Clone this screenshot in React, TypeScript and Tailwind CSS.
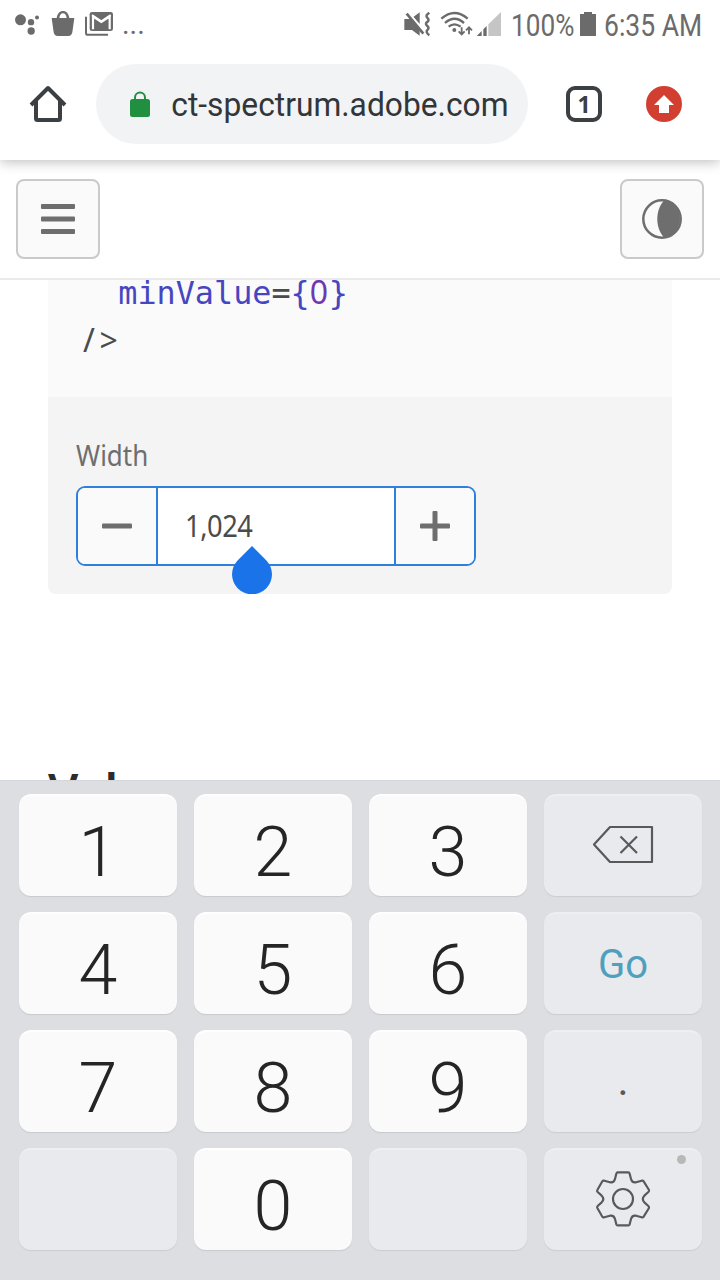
import React from "react";

function NotificationIcons() {
  return (
    <svg className="h-8 w-[104px] shrink-0" viewBox="36 24 312 96" fill="#6b6b6b">
      <circle cx="61.5" cy="59.5" r="16.5" />
      <circle cx="93" cy="66.500" r="9.500" />
      <circle cx="111" cy="52.500" r="6" />
      <circle cx="93.500" cy="93" r="11" />
      <path d="M155 54H170C172 41 179 33 189 33S206 41 208 54H223L217 97Q215 108 205 108H173Q163 108 161 97ZM178 54H200C199 45 195 40 189 40S179 45 178 54Z" fillRule="evenodd" />
      <path d="M258 50V98Q258 104.500 264.500 104.500H324" fill="none" stroke="#6b6b6b" strokeWidth="6" />
      <rect x="269" y="36" width="70" height="57" rx="7" />
      <path d="M279 88V50L304 66L329 50V88" fill="none" stroke="#fff" strokeWidth="6.500" />
      <path d="M276 43H332L304 61Z" fill="#6b6b6b" />
      <path d="M276 45.500L304 64L332 45.500" fill="none" stroke="#fff" strokeWidth="6" />
    </svg>
  );
}

function SystemIcons() {
  return (
    <svg className="h-8 w-[102px] shrink-0" viewBox="36 24 306 96" fill="#6b6b6b">
      <path d="M43 57H66L89 84V107L66 90H43Z" />
      <path d="M70 51L89 37V72Z" />
      <path d="M58 39L104 95" stroke="#fff" strokeWidth="4" />
      <path d="M50 41L100 101" stroke="#6b6b6b" strokeWidth="8" />
      <path d="M118 38Q106 46 111 52Q119 59 113 65Q104 70 111 77Q119 83 113 89Q105 96 118 106" fill="none" stroke="#6b6b6b" strokeWidth="7.500" />
      <g fill="none" stroke="#6b6b6b" strokeWidth="7">
        <path d="M154 56Q193 22 233 56" />
        <path d="M165 69Q193 44 222 69" />
        <path d="M176 80Q193 66 212 80" />
        <path d="M215 82V103M206 94L215 103L224 94M237 103V83M228 91L237 82L246 91" strokeWidth="5.500" />
      </g>
      <circle cx="193" cy="90" r="6" />
      <path d="M333 36V108H295V73Z" fill="#c5c5c5" />
      <path d="M260 108L275 93V108ZM280 88L290 78V108H280Z" />
    </svg>
  );
}

function StatusBar() {
  return (
    <header className="relative z-20 flex h-12 shrink-0 items-center bg-white pl-3 text-[30px] leading-none text-[#6b6b6b]">
      <NotificationIcons />
      <span className="ml-[6px] w-[29px] origin-left scale-x-[0.96]">...</span>
      <div className="ml-[251px]"><SystemIcons /></div>
      <span className="ml-[7px] w-[62px] origin-left translate-y-px scale-x-[0.845] whitespace-nowrap text-[31px]">100%</span>
      <svg className="ml-[7px] h-6 w-4 shrink-0" viewBox="0 0 16 24" fill="#6b6b6b">
        <path d="M4 0H12V2H16V24H0V2H4Z" />
      </svg>
      <span className="ml-[8px] w-[98px] origin-left translate-y-px scale-x-[0.855] whitespace-nowrap text-[31px]">6:35 AM</span>
    </header>
  );
}

function BrowserBar() {
  return (
    <div className="relative z-10 flex h-28 shrink-0 items-center bg-white pl-[29px] shadow-[0_2px_12px_rgba(0,0,0,0.26)]">
      <svg className="h-[38px] w-[38px]" viewBox="0 0 38 38" fill="none" stroke="#3c4043" strokeWidth="4">
        <path d="M2 20L19 3L36 20" strokeLinejoin="round" />
        <path d="M7 16V33.500Q7 35 8.500 35H29.500Q31 35 31 33.500V16" />
      </svg>
      <div className="ml-[29px] flex h-20 w-[432px] items-center rounded-full bg-[#f1f3f5] pl-[34px]">
        <svg className="h-[27px] w-5 shrink-0" viewBox="0 0 20 27">
          <path d="M5 9V6.500A5 5 0 0 1 15 6.500V9" fill="none" stroke="#208f40" strokeWidth="2" />
          <rect y="8" width="20" height="18" rx="2.500" fill="#208f40" />
        </svg>
        <div className="ml-[21px] flex w-[337px] translate-y-px justify-end overflow-hidden">
          <span className="origin-right scale-x-[0.962] whitespace-nowrap text-[33px] leading-[44px] text-[#333639]">ct-spectrum.adobe.com</span>
        </div>
      </div>
      <div className="ml-[38px] flex h-9 w-9 items-center justify-center rounded-[9px] border-4 border-[#3c4043] font-['Noto_Sans'] text-[23px] font-bold leading-none text-[#3c4043]">1</div>
      <svg className="ml-11 h-9 w-9" viewBox="0 0 36 36">
        <circle cx="18" cy="18" r="18" fill="#d23f31" />
        <path d="M18 9L28 19H23V27H13V19H8Z" fill="#fff" />
      </svg>
    </div>
  );
}

function SiteNav() {
  return (
    <nav className="flex h-[120px] shrink-0 items-start justify-between border-b-2 border-[#eaeaea] bg-white px-4 pt-[19px]">
      <button className="flex h-20 w-[84px] items-center justify-center rounded-lg border-2 border-[#cacaca] bg-[#fafafa]">
        <svg className="h-[30px] w-[34px]" viewBox="0 0 34 30" fill="#6e6e6e">
          <rect width="34" height="5" rx="1" />
          <rect y="12.500" width="34" height="5" rx="1" />
          <rect y="25" width="34" height="5" rx="1" />
        </svg>
      </button>
      <button className="flex h-20 w-[84px] items-center justify-center rounded-lg border-2 border-[#cacaca] bg-[#fafafa]">
        <svg className="h-10 w-10" viewBox="0 0 40 40">
          <circle cx="20" cy="20" r="18.700" fill="none" stroke="#6e6e6e" strokeWidth="2.500" />
          <path d="M22 1.500C13 11 13 29 22 38.500A18.700 18.700 0 0 0 22 1.500Z" fill="#6e6e6e" />
        </svg>
      </button>
    </nav>
  );
}

function NumberField() {
  return (
    <div className="relative flex h-20 w-[400px] overflow-visible rounded-[9px] border-2 border-[#2f80dc] bg-white">
      <button className="flex w-20 items-center justify-center rounded-l-[7px] border-r-2 border-[#2f80dc] bg-[#fafafa]">
        <svg className="h-[30px] w-[30px]" viewBox="0 0 30 30">
          <rect y="12.500" width="30" height="5" rx="1" fill="#6e6e6e" />
        </svg>
      </button>
      <div className="flex flex-1 items-center pl-[27px]">
        <span className="origin-left -translate-y-px scale-x-[0.88] font-['Noto_Sans'] text-[31px] tracking-[-0.500px] text-[#4b4b4b]">1,024</span>
      </div>
      <button className="flex w-20 items-center justify-center rounded-r-[7px] border-l-2 border-[#2f80dc] bg-[#fafafa]">
        <svg className="h-[30px] w-[30px]" viewBox="0 0 30 30" fill="#6e6e6e">
          <rect y="12.500" width="30" height="5" rx="1" />
          <rect x="12.500" width="5" height="30" rx="1" />
        </svg>
      </button>
      <svg className="absolute left-[154px] top-[58px] h-12 w-10" viewBox="0 0 40 48">
        <path d="M20 0L34.200 14.200A20 20 0 1 1 5.800 14.200Z" fill="#1a73e8" />
      </svg>
    </div>
  );
}

function DocsPage() {
  return (
    <main className="h-[500px] shrink-0 overflow-hidden bg-white px-12">
      <pre className="h-[117px] overflow-hidden bg-[#fafafa] pl-[32px] font-['DejaVu_Sans_Mono'] text-[31.800px] leading-[48px] text-[#4b4b4b]">
        <code className="-mt-[11px] block font-['DejaVu_Sans_Mono']">
          <span className="text-[#4646c0]">{"  minValue"}</span>=<span className="text-[#4646c0]">{"{"}</span>
          <span className="font-['Noto_Sans'] text-[32px] leading-none tracking-[0.800px] text-[#6f38b1]">0</span>
          <span className="text-[#4646c0]">{"}"}</span>
          {"\n"}
          <span className="pl-[3px] font-['Noto_Sans'] text-[32px] leading-none tracking-[4.500px]">{"/>"}</span>
        </code>
      </pre>
      <section className="h-[197px] rounded-b-lg bg-[#f4f4f4] px-7 pt-[38px]">
        <label className="flex h-[51px] origin-left scale-x-[0.895] items-start font-['Noto_Sans'] text-[29px] leading-[39px] text-[#6e6e6e]">Width</label>
        <NumberField />
      </section>
      <h3 className="mt-[165px] font-['Noto_Sans'] text-[48px] font-semibold leading-[64px] tracking-[-0.500px] text-[#2c2c2c]">Value</h3>
    </main>
  );
}

function BackspaceIcon() {
  return (
    <svg className="mt-[29px] h-[39px] w-[62px]" viewBox="0 0 62 39" fill="none" stroke="#595959" strokeWidth="2.200">
      <path d="M18 2H60V37H18L2 19.500Z" strokeLinejoin="round" />
      <path d="M28.500 11.500L45 28M45 11.500L28.500 28" />
    </svg>
  );
}

function GearIcon() {
  return (
    <svg className="mt-[20px] h-[58px] w-[58px]" viewBox="192 450 174 174" fill="none" stroke="#595959" strokeWidth="6.500" strokeLinejoin="round">
      <circle cx="279" cy="537" r="30" />
      <path d="M263 457H295Q298 457 299 461L303 477Q306 489 318 487L335 482Q339 481 341 484L357 510Q358 513 355 516L343 527Q334 537 343 547L355 558Q358 561 357 564L341 590Q339 593 335 592L318 587Q306 585 303 597L299 613Q298 616 295 616H263Q260 616 259 613L255 597Q252 585 240 587L223 592Q219 593 217 590L202 564Q200 561 203 558L215 547Q225 537 215 527L203 516Q200 513 202 510L217 484Q219 481 223 482L240 487Q252 489 255 477L259 461Q260 457 263 457Z" />
    </svg>
  );
}

function DigitKey({ digit }: { digit: string }) {
  return (
    <button className="flex h-[102px] justify-center rounded-[12px] border-t-2 border-t-white bg-[#fafafa] font-['Roboto'] text-[70px] font-light leading-[112px] text-[#252525] shadow-[0_1px_1px_#c8c9cd]">
      {digit}
    </button>
  );
}

function UtilityKey({ children }: { children?: React.ReactNode }) {
  return (
    <button className="relative flex h-[102px] justify-center rounded-[12px] border-t-2 border-t-[#efeff2] bg-[#e9eaee] shadow-[0_1px_1px_#cbccd0]">
      {children}
    </button>
  );
}

function Keypad() {
  return (
    <section className="grid h-[500px] shrink-0 grid-cols-4 content-start gap-x-[17px] gap-y-4 border-t border-[#d5d6d9] bg-[#dddee2] pl-[19px] pr-[18px] pt-[13px]">
      <DigitKey digit="1" />
      <DigitKey digit="2" />
      <DigitKey digit="3" />
      <UtilityKey><BackspaceIcon /></UtilityKey>
      <DigitKey digit="4" />
      <DigitKey digit="5" />
      <DigitKey digit="6" />
      <UtilityKey><span className="text-[40px] leading-[101px] text-[#4f9fbd]">Go</span></UtilityKey>
      <DigitKey digit="7" />
      <DigitKey digit="8" />
      <DigitKey digit="9" />
      <UtilityKey><span className="text-[42px] leading-[98px] text-[#595959]">.</span></UtilityKey>
      <UtilityKey />
      <DigitKey digit="0" />
      <UtilityKey />
      <UtilityKey>
        <GearIcon />
        <span className="absolute right-4 top-[5px] h-[9px] w-[9px] rounded-full bg-[#b8b8b8]" />
      </UtilityKey>
    </section>
  );
}

export default function App() {
  return (
    <div className="flex h-[1280px] w-[720px] flex-col overflow-hidden bg-white font-['Roboto',sans-serif]">
      <StatusBar />
      <BrowserBar />
      <SiteNav />
      <DocsPage />
      <Keypad />
    </div>
  );
}
